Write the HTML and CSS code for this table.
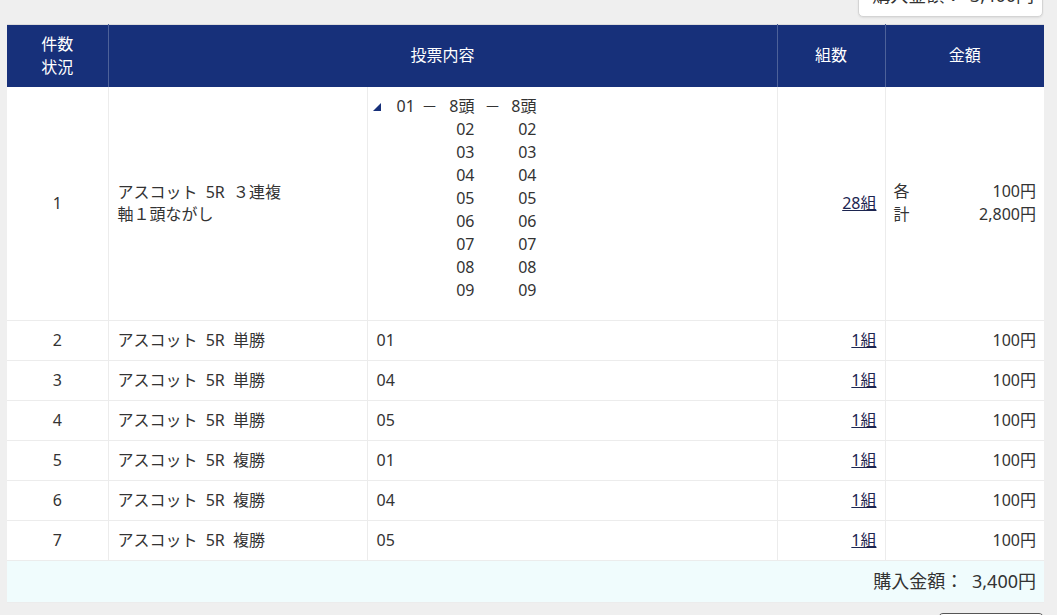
FILE: index.html
```html
<!DOCTYPE html>
<html lang="ja">
<head>
<meta charset="utf-8">
<link rel="stylesheet" href="styles.css">
</head>
<body>
<div class="page">
  <div class="top-summary">購入金額： 3,400円</div>
  <table class="bets">
    <thead>
      <tr>
        <th class="c-no">件数<br>状況</th>
        <th colspan="2">投票内容</th>
        <th class="c-cnt">組数</th>
        <th class="c-amt">金額</th>
      </tr>
    </thead>
    <tbody>
      <tr class="big">
        <td class="c-no">1</td>
        <td class="c-race">アスコット 5R ３連複<br>軸１頭ながし</td>
        <td class="c-content multi">
          <div class="combo">
            <span class="tri"></span><span class="n1">01</span><span class="dash">－</span><span class="ca">8頭</span><span class="dash2">－</span><span class="cb">8頭</span>
            <span></span><span></span><span></span><span class="ca">02</span><span></span><span class="cb">02</span>
            <span></span><span></span><span></span><span class="ca">03</span><span></span><span class="cb">03</span>
            <span></span><span></span><span></span><span class="ca">04</span><span></span><span class="cb">04</span>
            <span></span><span></span><span></span><span class="ca">05</span><span></span><span class="cb">05</span>
            <span></span><span></span><span></span><span class="ca">06</span><span></span><span class="cb">06</span>
            <span></span><span></span><span></span><span class="ca">07</span><span></span><span class="cb">07</span>
            <span></span><span></span><span></span><span class="ca">08</span><span></span><span class="cb">08</span>
            <span></span><span></span><span></span><span class="ca">09</span><span></span><span class="cb">09</span>
          </div>
        </td>
        <td class="c-cnt"><a href="#">28組</a></td>
        <td class="c-amt">
          <div class="amt-line"><span>各</span><span>100円</span></div>
          <div class="amt-line"><span>計</span><span>2,800円</span></div>
        </td>
      </tr>
      <tr><td class="c-no">2</td><td class="c-race">アスコット 5R 単勝</td><td class="c-content">01</td><td class="c-cnt"><a href="#">1組</a></td><td class="c-amt">100円</td></tr>
      <tr><td class="c-no">3</td><td class="c-race">アスコット 5R 単勝</td><td class="c-content">04</td><td class="c-cnt"><a href="#">1組</a></td><td class="c-amt">100円</td></tr>
      <tr><td class="c-no">4</td><td class="c-race">アスコット 5R 単勝</td><td class="c-content">05</td><td class="c-cnt"><a href="#">1組</a></td><td class="c-amt">100円</td></tr>
      <tr><td class="c-no">5</td><td class="c-race">アスコット 5R 複勝</td><td class="c-content">01</td><td class="c-cnt"><a href="#">1組</a></td><td class="c-amt">100円</td></tr>
      <tr><td class="c-no">6</td><td class="c-race">アスコット 5R 複勝</td><td class="c-content">04</td><td class="c-cnt"><a href="#">1組</a></td><td class="c-amt">100円</td></tr>
      <tr><td class="c-no">7</td><td class="c-race">アスコット 5R 複勝</td><td class="c-content">05</td><td class="c-cnt"><a href="#">1組</a></td><td class="c-amt">100円</td></tr>
    </tbody>
    <tfoot>
      <tr><td colspan="5" class="total">購入金額： 3,400円</td></tr>
    </tfoot>
  </table>
  <div class="actions"><button class="btn" type="button">戻る</button></div>
</div>
</body>
</html>
```

FILE: styles.css
```css
html, body {
  margin: 0;
  padding: 0;
  background: #efefef;
  overflow: hidden;
}
body {
  font-family: "Noto Sans", "Noto Sans CJK JP", sans-serif;
  font-size: 16px;
  color: #333;
}
.page {
  width: 1037px;
  height: 615px;
  overflow: hidden;
  padding-left: 7px;
  display: flex;
  flex-direction: column;
}
.top-summary {
  flex: none;
  align-self: flex-end;
  width: 185px;
  height: 40px;
  margin-top: -23px;
  margin-right: 1px;
  box-sizing: border-box;
  background: #fff;
  border: 1px solid #d4d4d4;
  border-radius: 5px;
  box-shadow: 0 1px 2px rgba(0,0,0,0.08);
  text-align: right;
  padding: 7px 8px 0 0;
  line-height: 20px;
  font-size: 18px;
  margin-bottom: 7px;
  word-spacing: 3px;
  white-space: nowrap;
}
.bets {
  flex: none;
  width: 1037px;
  border-collapse: collapse;
  background: #fff;
  border-top: 1px solid #dcdcdc;
}
.bets th {
  background: #17307a;
  color: #fff;
  font-weight: normal;
  height: 62px;
  padding: 0;
  line-height: 23px;
  text-align: center;
  border-left: 1px solid #4d6199;
  box-sizing: border-box;
}
.bets th:first-child { border-left: none; }
.bets td {
  border: 1px solid #ececec;
  height: 40px;
  padding: 0 8px 1px;
  line-height: 22px;
  vertical-align: middle;
  box-sizing: border-box;
}
.bets tbody tr:first-child td { border-top: none; }
.bets td:first-child { border-left: none; }
.bets td:last-child { border-right: none; }
.c-no { width: 101px; text-align: center; box-sizing: border-box; }
td.c-no { padding: 0 0 1px; }
.c-race { width: 259px; box-sizing: border-box; word-spacing: 4px; }
td.c-race { padding-left: 9px; }
.c-content { width: 410px; box-sizing: border-box; }
td.c-content { padding-left: 9px; }
.c-cnt { width: 108px; text-align: right; box-sizing: border-box; }
.c-amt { width: 159px; text-align: right; box-sizing: border-box; }
.c-cnt a { color: #1c2550; text-decoration: underline; }
tr.big td { height: 234px; }
.bets td.multi { padding: 8px 8px 18px 5px; }
.combo {
  display: grid;
  grid-template-columns: 24px 23px 20px 35px 36px 26px;
  line-height: 23px;
  white-space: nowrap;
}
.tri {
  width: 0;
  height: 0;
  border-left: 8px solid transparent;
  border-bottom: 8px solid #17307a;
  align-self: center;
  margin-top: 2px;
}
.dash, .dash2 { text-align: center; }
.ca, .cb { text-align: right; }
.amt-line {
  display: flex;
  justify-content: space-between;
  line-height: 23px;
}
.total {
  background: #f0fcfd;
  height: 42px !important;
  text-align: right;
  padding-right: 8px !important;
  font-size: 18px;
  word-spacing: 4px;
}
.actions {
  flex: none;
  display: flex;
  justify-content: flex-end;
  margin-top: 10px;
}
.btn {
  width: 106px;
  height: 34px;
  background: #fff;
  border: 1px solid #555;
  border-radius: 5px;
  font-family: inherit;
  font-size: 16px;
  color: #333;
}
```
